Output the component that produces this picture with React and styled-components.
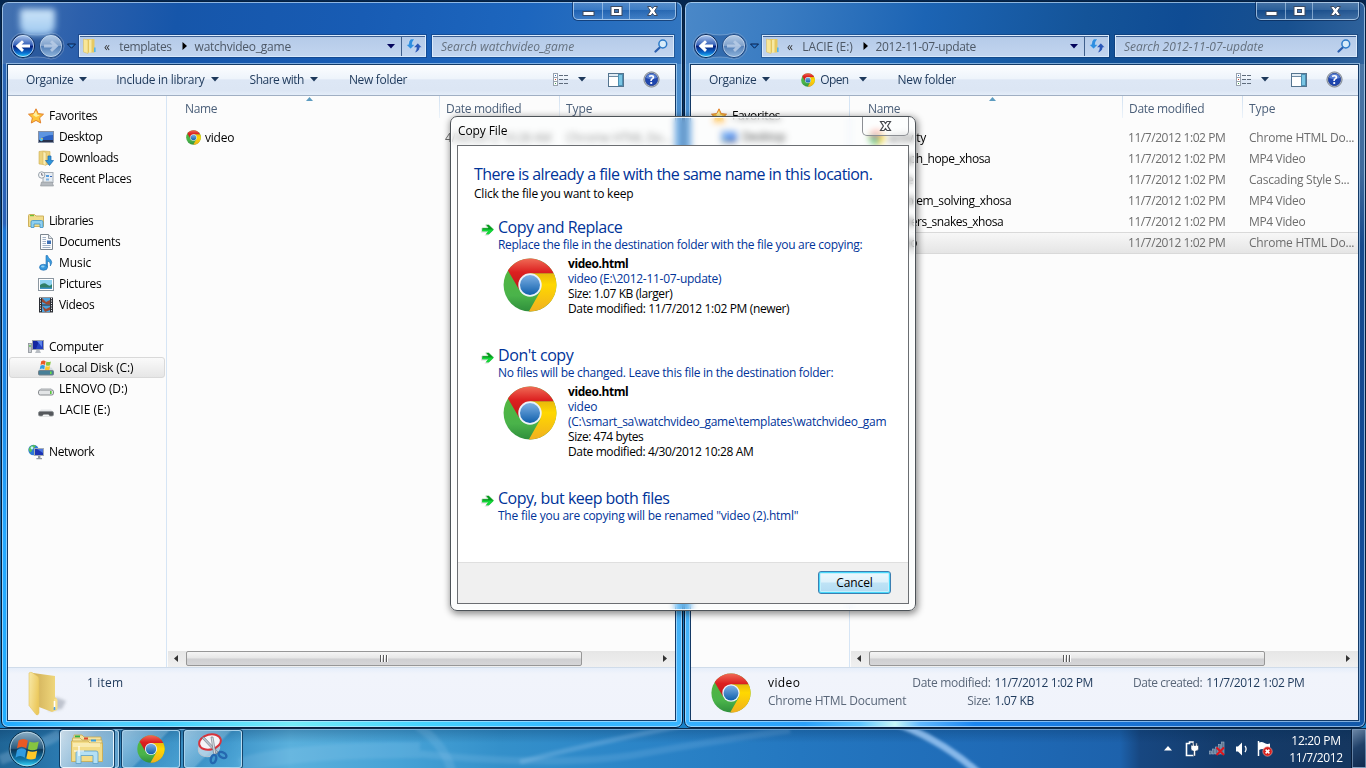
import React, { useLayoutEffect, useRef, useId } from "react";
import styled, { createGlobalStyle, css } from "styled-components";

const Global = createGlobalStyle`
  * { box-sizing: border-box; }
  html, body { margin: 0; padding: 0; overflow: hidden; background: #0a3468; }
  body { font-family: "Open Sans", "Noto Sans", sans-serif; font-size: 12px; line-height: 15px; color: #000; }
  svg { display: block; flex: none; }
`;

/* ---------- text ---------- */

const LabelText = styled.span`
  display: inline-block;
  flex: none;
  width: max-content;
  white-space: pre;
  color: ${(p) => p.$color || "inherit"};
  font-weight: ${(p) => (p.$bold ? 700 : 400)};
  font-style: ${(p) => (p.$italic ? "italic" : "normal")};
`;

/* A label tracked so that it fills the width w. */
function Label({ w, color, bold, italic, children }) {
  const ref = useRef(null);
  useLayoutEffect(() => {
    const el = ref.current;
    el.style.letterSpacing = "0px";
    const natural = el.getBoundingClientRect().width;
    el.style.letterSpacing = `${(w + 0.3 - natural) / children.length}px`;
  }, [w, children]);
  return (
    <LabelText ref={ref} $color={color} $bold={bold} $italic={italic}>
      {children}
    </LabelText>
  );
}

/* ---------- icons ---------- */

function Chrome({ size }) {
  const id = useId().replace(/[^a-zA-Z0-9]/g, "");
  return (
    <svg width={size} height={size} viewBox="0 0 48 48">
      <defs>
        <linearGradient id={id + "r"} x1="0" y1="0" x2="0" y2="1">
          <stop offset="0" stopColor="#f06a55" />
          <stop offset=".45" stopColor="#dc2020" />
          <stop offset="1" stopColor="#c01818" />
        </linearGradient>
        <linearGradient id={id + "b"} x1="0" y1="0" x2="0" y2="1">
          <stop offset="0" stopColor="#7db0e4" />
          <stop offset="1" stopColor="#1060ac" />
        </linearGradient>
        <linearGradient id={id + "y"} x1="0" y1="0" x2="0" y2="1">
          <stop offset="0" stopColor="#e8b80c" />
          <stop offset=".3" stopColor="#ffd800" />
          <stop offset="1" stopColor="#f0b020" />
        </linearGradient>
        <linearGradient id={id + "g"} x1="0" y1="0" x2="0" y2="1">
          <stop offset="0" stopColor="#56b83c" />
          <stop offset=".7" stopColor="#4ab34a" />
          <stop offset="1" stopColor="#2f8f3c" />
        </linearGradient>
      </defs>
      <circle cx="24" cy="24" r="23.5" fill={`url(#${id}g)`} />
      <path d="M24 13.5H45A23.5 23.5 0 0 1 23 47.5L33.3 29.4Z" fill={`url(#${id}y)`} />
      <path d="M45 13.5A23.5 23.5 0 0 0 4.4 11L14 27.5L24 13.5Z" fill={`url(#${id}r)`} />
      <circle cx="24" cy="24" r="10.4" fill="#eef3f8" />
      <circle cx="24" cy="24" r="8.9" fill={`url(#${id}b)`} />
    </svg>
  );
}

const Icon16 = ({ children }) => (
  <svg width="16" height="16" viewBox="0 0 16 16">
    {children}
  </svg>
);

const Flag = () => (
  <>
    <path d="M1 2Q4 0 7 2L6 7Q3 5 0 7Z" fill="#ea5a24" />
    <path d="M8 2.5Q11 4 14 2.5L13 7.5Q10 9 7 7.5Z" fill="#86c440" />
    <path d="M0 8Q3 6 6 8L5 13Q2 11 -1 13Z" fill="#2f9be0" />
    <path d="M7 8.5Q10 10 13 8.5L12 13.5Q9 15 6 13.5Z" fill="#ffc828" />
  </>
);

const icons = {
  star: (
    <Icon16>
      <path d="M8 .8L10.2 5.6L15.5 6.2L11.6 9.8L12.7 15L8 12.4L3.3 15L4.4 9.8L.5 6.2L5.8 5.6Z" fill="#fdc53a" stroke="#e2812c" />
      <path d="M8 3L9.2 6.7L12 7.3L8 9L5 7Z" fill="#fff0a0" />
    </Icon16>
  ),
  desktop: (
    <Icon16>
      <rect x=".5" y="2.5" width="15" height="11" fill="#2b62c4" stroke="#8590a5" />
      <path d="M1 3H15V6Q7 6 1 11Z" fill="#5e95e0" />
      <rect x="1" y="11" width="14" height="2" fill="#27324c" />
      <circle cx="3.4" cy="10.6" r="1.6" fill="#55c0f0" />
      <rect x="3.4" y="9" width="1.3" height="1.3" fill="#f3d040" />
    </Icon16>
  ),
  downloads: (
    <Icon16>
      <path d="M1 1.5L5 1L12 1.5V14.5H5L1 14Z" fill="#ecd27c" stroke="#cfae55" strokeWidth=".6" />
      <path d="M5 1.5L8 2.5V15.5L5 14.5Z" fill="#fbeeb4" stroke="#cfae55" strokeWidth=".5" />
      <path d="M10 6H13V10.5H15.5L11.5 15.5L7.5 10.5H10Z" fill="#2e96dc" stroke="#1a68b0" strokeWidth=".7" />
    </Icon16>
  ),
  recent: (
    <Icon16>
      <rect x="5" y="1.5" width="10" height="10" fill="#e7edf3" stroke="#a4acb4" />
      <rect x="8" y="4" width="3" height="2" fill="#569bdd" />
      <rect x="12" y="5" width="2" height="1" fill="#3a68b8" />
      <rect x="8" y="7.5" width="3" height="2" fill="#86b5e2" />
      <path d="M3.5 11H14L15.5 15H2.5Z" fill="#b5babf" stroke="#8f9499" strokeWidth=".6" />
      <circle cx="3.7" cy="4" r="3.2" fill="#f4f6f8" stroke="#9aa3ac" />
      <path d="M3.7 2V4.2H5.2" stroke="#556" fill="none" strokeWidth=".8" />
    </Icon16>
  ),
  libraries: (
    <Icon16>
      <path d="M.5 2.5Q.5 1.5 1.5 1.5H6.5L8 3H15.5V13.5H.5Z" fill="#f1dc8b" stroke="#cdb05c" />
      <rect x="2" y="2" width="4" height="1.2" fill="#6bbf3a" />
      <path d="M3 14.5V9Q3 7.5 4.5 7.5H13.5Q15 7.5 15 9V14.5H12V11H6V14.5Z" fill="#8fd0f0" stroke="#3e93c8" strokeWidth=".8" />
    </Icon16>
  ),
  documents: (
    <Icon16>
      <path d="M2.5 .5H10.5L14.5 4.5V15.5H2.5Z" fill="#fbfcfd" stroke="#7d8790" />
      <path d="M10.5 .5V4.5H14.5" fill="#dde3e8" stroke="#7d8790" strokeWidth=".8" />
      <path d="M4.5 3.5H8M4.5 5.5H8M4.5 7.5H8M4.5 9.5H8M4.5 11.5H12.5M4.5 13.5H12.5" stroke="#9fb0c4" />
      <rect x="9" y="6.5" width="4" height="3.5" fill="#3c6fb4" />
    </Icon16>
  ),
  music: (
    <Icon16>
      <path d="M8 .5H9.5Q10 3 12.7 4.7Q15 7 12.3 11Q13 7 9.5 6V12H8Z" fill="#3a9de0" stroke="#1c6cb0" strokeWidth=".6" />
      <ellipse cx="5.5" cy="12.3" rx="4" ry="3" fill="#3596dc" stroke="#1c6cb0" strokeWidth=".6" />
      <ellipse cx="4.8" cy="11.5" rx="1.8" ry="1" fill="#8fd0f5" />
    </Icon16>
  ),
  pictures: (
    <Icon16>
      <rect x=".5" y="2.5" width="15" height="12" fill="#fff" stroke="#8b96a0" />
      <rect x="2" y="4" width="12" height="9" fill="#8fd3f2" />
      <path d="M2 9Q6 6 9 8.5T14 8V13H2Z" fill="#2f7f67" />
      <rect x="2" y="11.5" width="12" height="1.5" fill="#3d92c4" />
    </Icon16>
  ),
  videos: (
    <Icon16>
      <rect x="1" y=".5" width="14" height="15" fill="#2a2d33" />
      <rect x="4" y="1" width="8" height="6.5" fill="#4ba3df" />
      <rect x="4" y="8.5" width="8" height="6.5" fill="#4ba3df" />
      <path d="M4 1L8 5L12 3V7.5H9L4 5ZM4 9L8 12L12 10V13L7 15Z" fill="#9a4a34" />
      <path d="M2.5 1V15.5M13.5 1V15.5" stroke="#e8ecef" strokeDasharray="1.2 1.2" />
    </Icon16>
  ),
  computer: (
    <Icon16>
      <rect x=".5" y="4.5" width="3" height="9" fill="#c9cdd2" stroke="#8b9096" strokeWidth=".8" />
      <rect x="1.4" y="6" width="1.2" height="2" fill="#4ac03a" />
      <rect x="4.5" y="1.5" width="11" height="9" fill="#2340c0" stroke="#9aa0aa" />
      <path d="M5 2H11L8 10H5Z" fill="#1426a0" />
      <path d="M9 2H14V8Z" fill="#5c84ea" />
      <path d="M8.5 11H11.5L13 14H7Z" fill="#b9bec4" />
    </Icon16>
  ),
  osdrive: (
    <Icon16>
      <path d="M2.5 7.5H13.5L15.5 10.5H.5Z" fill="#d3dbe0" />
      <g transform="translate(2.5 -.3) scale(.74)"><Flag /></g>
      <rect x=".5" y="10.5" width="15" height="4.5" rx="1" fill="#477f98" stroke="#72818a" />
      <rect x="12" y="11.5" width="1.6" height="2.5" fill="#68e048" />
    </Icon16>
  ),
  drive: (
    <Icon16>
      <path d="M3 7.5H13L15.5 10.5H.5Z" fill="#eceef0" stroke="#b8bcc0" strokeWidth=".6" />
      <rect x=".5" y="9" width="15" height="5" rx="1.8" fill="#e3e5e7" stroke="#85898d" />
      <rect x="12" y="10" width="1.6" height="3" fill="#58c83c" />
    </Icon16>
  ),
  usb: (
    <Icon16>
      <path d="M3 7.5H13L15.5 10.5H.5Z" fill="#e4e6e8" />
      <rect x=".5" y="9.500" width="15" height="4.500" rx="1.5" fill="#55585c" stroke="#8b8f93" strokeWidth=".8" />
      <path d="M4 14.600L5.5 12.500H10.5L12 14.600Z" fill="#f4f5f6" />
    </Icon16>
  ),
  network: (
    <Icon16>
      <circle cx="5.5" cy="6" r="5.2" fill="#2b78d8" />
      <path d="M1 4Q4 0 8 1.5Q7 4 4 4.5Q5 7 2 8.5Q0 6 1 4Z" fill="#58c058" />
      <circle cx="4" cy="4" r="1.4" fill="#c4f0ff" />
      <rect x="6.5" y="4.5" width="9" height="7" fill="#1c34b4" stroke="#a4acb4" />
      <path d="M9 5H15V9Z" fill="#4a74e0" />
      <path d="M10 12H12.4V14H14V15.3H8.4V14H10Z" fill="#9298a0" />
    </Icon16>
  ),
};

const SmallFolder = () => (
  <svg width="14" height="16" viewBox="0 0 14 16">
    <path d="M4 1H11.5V14.5H4Z" fill="#e6c962" />
    <path d="M.5 1L5 2V15.5L.5 14Z" fill="#f8e698" stroke="#d9ba55" strokeWidth=".5" />
    <path d="M6 2L8.5 1.5V14.5L6 15Z" fill="#f7e9a4" />
    <path d="M11 9.5H12.6V14H11Z" fill="#55b4e8" />
  </svg>
);

const BigFolder = () => (
  <svg width="42" height="46" viewBox="0 0 42 46">
    <defs>
      <linearGradient id="fback" x1="0" x2="1">
        <stop offset="0" stopColor="#cfae58" />
        <stop offset="1" stopColor="#f2da7e" />
      </linearGradient>
      <linearGradient id="ffront" x1="0" x2="1" y1="0" y2=".4">
        <stop offset="0" stopColor="#f8e9a8" />
        <stop offset="1" stopColor="#ecc95e" />
      </linearGradient>
      <filter id="fsoft"><feGaussianBlur stdDeviation="1.5" /></filter>
    </defs>
    <path d="M20 40L28 26L38 30L34 38Z" fill="#9fa4b0" opacity=".6" filter="url(#fsoft)" />
    <path d="M5 2L27 5V26L29 28V39L24 41L11 36Z" fill="url(#fback)" />
    <path d="M1 2Q2 1 4 1.500L10 5.500Q11 7 11 9V42Q10 45 8 43.5L1 34.5Z" fill="url(#ffront)" stroke="#e3c560" strokeWidth=".6" />
    <path d="M26 28Q29 27 29.5 29V38L26 39.5Z" fill="#f7e08e" />
    <path d="M26.5 30V37" stroke="#fff" strokeWidth="1.6" />
    <path d="M26.5 36V39" stroke="#4aa0e8" strokeWidth="1.6" />
  </svg>
);

const Caret = ({ color = "#1e395b" }) => (
  <svg width="8" height="5" viewBox="0 0 8 5">
    <path d="M0 0H8L4 4.6Z" fill={color} />
  </svg>
);

const NavOrbs = () => (
  <svg width="69" height="28" viewBox="0 0 69 28">
    <defs>
      <linearGradient id="ob" x1="0" y1="0" x2="0" y2="1">
        <stop offset="0" stopColor="#b4cdf0" />
        <stop offset=".45" stopColor="#3560b8" />
        <stop offset=".52" stopColor="#06207e" />
        <stop offset=".8" stopColor="#0a6fd0" />
        <stop offset="1" stopColor="#30d8ff" />
      </linearGradient>
      <linearGradient id="of" x1="0" y1="0" x2="0" y2="1">
        <stop offset="0" stopColor="#b9cfe8" />
        <stop offset=".5" stopColor="#7d9fca" />
        <stop offset=".52" stopColor="#5480b8" />
        <stop offset="1" stopColor="#93b8de" />
      </linearGradient>
    </defs>
    <path d="M13 1Q27 5 41 1A13 13 0 0 1 41 27Q27 23 13 27A13 13 0 0 1 13 1Z" fill="#0a3474" fillOpacity=".28" stroke="#ffffff" strokeOpacity=".25" />
    <circle cx="13" cy="14" r="11.5" fill="url(#ob)" stroke="#0b2550" />
    <circle cx="13" cy="14" r="10.6" fill="none" stroke="#dcebff" strokeOpacity=".75" />
    <path d="M5.6 14L12 8.2L14 10.2L11.6 12.5H20V15.6H11.6L14 17.8L12 19.9Z" fill="#fff" />
    <circle cx="41" cy="14" r="11.5" fill="url(#of)" stroke="#1d467f" />
    <circle cx="41" cy="14" r="10.6" fill="none" stroke="#d8e6f6" strokeOpacity=".6" />
    <path d="M48.4 14L42 8.2L40 10.2L42.4 12.5H34V15.6H42.4L40 17.8L42 19.9Z" fill="#b8cde6" fillOpacity=".85" />
    <path d="M57.500 12H65.500L61.500 16.2Z" fill="#2a78cc" stroke="#08204c" strokeWidth="1" />
  </svg>
);

const Refresh = () => (
  <svg width="16" height="14" viewBox="0 0 16 14">
    <path d="M4.600 0H8.600Q6.200 2.600 6.200 5.400H9L4.600 10L0 5.400H2.400Q2.600 2 4.600 0Z" fill="#2f8ee0" stroke="#eaf4ff" strokeWidth=".4" />
    <path d="M8.500 14Q10.500 11.500 10.500 8.600H7.600L11.800 4L16 8.600H13.800Q13.600 12.500 8.500 14Z" fill="#2b58b8" stroke="#eaf4ff" strokeWidth=".4" />
  </svg>
);

const Magnifier = () => (
  <svg width="14" height="14" viewBox="0 0 14 14">
    <path d="M6 8.200L1.500 12.500" stroke="#2b5fae" strokeWidth="2.200" strokeLinecap="round" />
    <circle cx="8.800" cy="5" r="3.900" fill="#d8ecfa" stroke="#2c7ac8" strokeWidth="1.500" />
  </svg>
);

const ViewsIcon = () => (
  <svg width="15" height="13" viewBox="0 0 15 13" shapeRendering="crispEdges">
    {[0, 4, 8].map((y, i) => (
      <g key={y}>
        <rect x=".5" y={y + 0.5} width="4" height="4" fill="#fff" stroke="#98a2ae" />
        <rect x="2" y={y + 2} width="1" height="1" fill={["#2f6fc0", "#c8442c", "#3f9a4a"][i]} />
        <path d={`M6 ${y + 2.5}H10M11 ${y + 2.5}H15`} stroke="#5f6c7c" />
      </g>
    ))}
  </svg>
);

const PaneIcon = () => (
  <svg width="16" height="14" viewBox="0 0 16 14" shapeRendering="crispEdges">
    <rect x=".5" y=".5" width="15" height="13" fill="#fff" stroke="#54748f" />
    <path d="M1 1H15V3H1Z" fill="#e2ecf4" />
    <path d="M1 3.500H10" stroke="#6e8ba4" />
    <rect x="10.500" y="1.500" width="4" height="11" fill="#79c5e4" stroke="#4d8fb2" />
  </svg>
);

const HelpText = styled.text`
  font: bold 12px "Open Sans", sans-serif;
  fill: #fff;
`;

const HelpIcon = () => (
  <svg width="17" height="17" viewBox="0 0 17 17">
    <circle cx="8.500" cy="8.500" r="7.600" fill="#c7ccd2" stroke="#7e868f" />
    <circle cx="8.500" cy="8.500" r="6.200" fill="#1f46ae" stroke="#163385" strokeWidth=".6" />
    <path d="M3 7A5.700 5.700 0 0 1 14 7Q8 9 3 7Z" fill="#6b92de" opacity=".8" />
    <HelpText x="8.500" y="12.700" textAnchor="middle">?</HelpText>
  </svg>
);

const ArrowIcon = () => (
  <svg width="15" height="15" viewBox="0 0 15 15">
    <path d="M1 6H7L5 3H8.500L13 8.500L8 13.500H4.500L7 10.500H1Z" fill="#b8b8b8" opacity=".5" />
    <path d="M2 5.700H8L5.500 2.500H8.800L14 7.500L8.800 12.500H5.500L8 9.400H2Z" fill="#079a1e" stroke="#fff" strokeWidth=".5" />
    <path d="M2.200 7.600H13.800L8.800 12.300H6L8.200 9.200H2.200Z" fill="#12d838" />
  </svg>
);

/* ---------- explorer window ---------- */

const Frame = styled.section`
  position: absolute;
  top: 1px;
  left: ${(p) => p.$left}px;
  width: 682px;
  height: 727px;
  display: flex;
  flex-direction: column;
  border: 1px solid #06203f;
  border-radius: 7px;
  box-shadow: inset 0 0 0 1px rgba(205, 232, 255, 0.65);
  background: ${(p) => p.$skin};
`;

const TitleArea = styled.header`
  height: 62px;
  display: flex;
  flex-direction: column;
  position: relative;
`;

const CaptionRow = styled.div`
  display: flex;
  justify-content: flex-end;
  height: 30px;
  padding-right: 6px;
`;

const Captions = styled.div`
  display: flex;
  width: 103px;
  height: 18px;
  border: 1px solid rgba(200, 225, 250, 0.7);
  border-top: 0;
  border-radius: 0 0 5px 5px;
  box-shadow: 0 0 0 1px rgba(5, 30, 70, 0.55);
  background: linear-gradient(rgba(255, 255, 255, 0.2), rgba(255, 255, 255, 0.08) 50%, rgba(10, 50, 110, 0.15) 50%, rgba(255, 255, 255, 0.1));
`;

const Caption = styled.div`
  width: ${(p) => p.$w}px;
  display: flex;
  align-items: center;
  justify-content: center;
  & + & { border-left: 1px solid rgba(200, 225, 250, 0.55); }
`;

const CaptionButtons = () => (
  <Captions>
    <Caption $w={28}>
      <svg width="13" height="12"><rect x="1" y="6.500" width="11" height="4" fill="#fff" stroke="#3b4a62" /></svg>
    </Caption>
    <Caption $w={27}>
      <svg width="13" height="12">
        <rect x="1" y="1.500" width="11" height="9" fill="#fff" stroke="#3b4a62" />
        <rect x="4.500" y="4.500" width="4" height="3" fill="#3f73b2" stroke="#3b4a62" />
      </svg>
    </Caption>
    <Caption $w={46}>
      <svg width="13" height="12" viewBox="0 0 13 12">
        <path d="M1.500 1.500H5L6.500 3.500L8 1.500H11.500L8.600 6L11.500 10.500H8L6.500 8.500L5 10.500H1.500L4.400 6Z" fill="#fff" stroke="#3b4a62" />
      </svg>
    </Caption>
  </Captions>
);

const Ghost = styled.div`
  position: absolute;
  left: 18px;
  top: 7px;
  width: 35px;
  height: 26px;
  background: linear-gradient(#d6ecfd, #a4cef4);
  border-radius: 3px 3px 9px 9px;
  filter: blur(3px);
  opacity: 0.95;
`;

const NavRow = styled.div`
  display: flex;
  align-items: center;
  height: 28px;
  padding-left: 8px;
`;

const glass = css`
  height: 22px;
  display: flex;
  align-items: center;
  border: 1px solid rgba(225, 240, 255, 0.8);
  box-shadow: 0 0 0 1px rgba(8, 40, 90, 0.35), inset 0 1px 0 #3c5f92;
  background: linear-gradient(#b4cae8, #c2d5ef);
`;

const AddressBar = styled.div`
  ${glass}
  width: 347px;
  padding-left: 3px;
`;

const Crumbs = styled.div`
  display: flex;
  align-items: center;
  flex: 1;
  gap: 7px;
`;

const CrumbArrow = styled.svg`
  margin: 0 1px 0 3px;
`;

const RefreshBox = styled.div`
  width: 24px;
  height: 20px;
  margin-left: 6px;
  display: flex;
  align-items: center;
  justify-content: center;
  border-left: 1px solid #40608c;
`;

const SearchBox = styled.div`
  ${glass}
  width: 242px;
  margin-left: 6px;
  padding: 0 5px 0 8px;
  justify-content: space-between;
`;

const Client = styled.div`
  width: 669px;
  height: 657px;
  margin-left: 5px;
  display: flex;
  flex-direction: column;
  border: 1px solid #143a66;
  box-shadow: 0 0 0 1px rgba(200, 230, 255, 0.6);
  background: #fcfcfc;
`;

const Toolbar = styled.div`
  height: 31px;
  flex: none;
  display: flex;
  align-items: center;
  padding: 0 15px 1px 18px;
  color: #1e395b;
  border-bottom: 1px solid #a0afc3;
  background: linear-gradient(#fcfdff, #eef4fb 45%, #dde7f5 50%, #dce6f4 85%, #e4edf9);
`;

const ToolItem = styled.div`
  display: flex;
  align-items: center;
  gap: ${(p) => p.$gap || 6}px;
  margin-right: ${(p) => p.$after || 0}px;
`;

const Spacer = styled.div`
  flex: 1;
`;

const Body = styled.div`
  display: flex;
  height: 571px;
`;

const NavPane = styled.nav`
  width: 159px;
  padding-top: 9px;
  border-right: 1px solid #d6e5f5;
`;

const NavItem = styled.div`
  height: 21px;
  display: flex;
  align-items: center;
  gap: 5px;
  margin-right: 1px;
  margin-left: 1px;
  padding-left: ${(p) => (p.$root ? 18 : 28)}px;
  border: 1px solid transparent;
  ${(p) =>
    p.$active &&
    css`
      border-color: #d9d9d9;
      border-radius: 3px;
      background: linear-gradient(#fafafa, #e6e6e6);
    `}
`;

const ListPane = styled.div`
  flex: 1;
  display: flex;
  flex-direction: column;
  min-width: 0;
`;

const cols = "273px 120px 1fr";

const HeaderRow = styled.div`
  display: grid;
  grid-template-columns: ${cols};
  height: 22px;
  margin-bottom: 9px;
  color: #4c607a;
  position: relative;
`;

const HeadCell = styled.div`
  padding: 5px 0 0 ${(p) => p.$pad}px;
  border-image: ${(p) => (p.$last ? "none" : "linear-gradient(#cfdff0, #eef4fa) 1")};
  border-width: 0 ${(p) => (p.$last ? 0 : 1)}px 0 0;
  border-style: solid;
`;

const SortMark = styled.div`
  position: absolute;
  left: 139px;
  top: 1px;
`;

const FileRow = styled.div`
  display: grid;
  grid-template-columns: ${cols};
  align-items: center;
  height: 21px;
  color: #6d6d6d;
  box-shadow: ${(p) => (p.$selected ? "inset 0 1px #d9d9d9, 0 1px #d9d9d9" : "none")};
  background: ${(p) => (p.$selected ? "linear-gradient(#f8f8f8, #e5e5e5)" : "none")};
`;

const FileCell = styled.div`
  display: flex;
  align-items: center;
  gap: 4px;
  padding-left: ${(p) => p.$pad}px;
`;

const ScrollBar = styled.div`
  height: 16px;
  margin: auto 0 0 1px;
  display: flex;
  align-items: flex-start;
  background: linear-gradient(#e6e6e6, #f0f0f0);
`;

const ScrollArrow = styled.div`
  width: 18px;
  height: 15px;
  padding-right: 2px;
  display: flex;
  align-items: center;
  justify-content: center;
`;

const Thumb = styled.div`
  width: 396px;
  height: 15px;
  display: flex;
  align-items: center;
  justify-content: center;
  border: 1px solid #979797;
  border-radius: 2px;
  background: linear-gradient(#f5f5f5, #e6e6e6 48%, #cfcfd1 52%, #d6d6d8);
`;

const Details = styled.footer`
  flex: 1;
  display: flex;
  border-top: 1px solid #d0dcea;
  background: linear-gradient(#e6eefa, #f1f4fb 6px, #f0f3fb);
  color: #1e395b;
`;

const Grip = () => (
  <svg width="8" height="7" shapeRendering="crispEdges">
    <path d="M.5 0V7M3.500 0V7M6.500 0V7" stroke="#5a5a5a" />
    <path d="M1.500 0V7M4.500 0V7M7.500 0V7" stroke="#fff" />
  </svg>
);

const navItems = [
  ["star", "Favorites", 48, 1],
  ["desktop", "Desktop", 43],
  ["downloads", "Downloads", 59],
  ["recent", "Recent Places", 72],
  null,
  ["libraries", "Libraries", 44, 1],
  ["documents", "Documents", 61],
  ["music", "Music", 32],
  ["pictures", "Pictures", 42],
  ["videos", "Videos", 35],
  null,
  ["computer", "Computer", 54, 1],
  ["osdrive", "Local Disk (C:)", 74],
  ["drive", "LENOVO (D:)", 68],
  ["usb", "LACIE (E:)", 51],
  null,
  ["network", "Network", 45, 1],
];

function Explorer({ left, skin, ghost, crumbs, search, tools, nav, files, activeNav, children }) {
  return (
    <Frame $left={left} $skin={skin}>
      <TitleArea>
        {ghost && <Ghost />}
        <CaptionRow>
          <CaptionButtons />
        </CaptionRow>
        <NavRow>
          <NavOrbs />
          <AddressBar>
            <Crumbs>
              <SmallFolder />
              <Label w={8} color="#333">«</Label>
              <Label w={crumbs[0][1]} color="#4d5866">{crumbs[0][0]}</Label>
              <CrumbArrow width="5" height="8"><path d="M.500 0L5 4L.500 8Z" fill="#000" /></CrumbArrow>
              <Label w={crumbs[1][1]} color="#4d5866">{crumbs[1][0]}</Label>
            </Crumbs>
            <Caret color="#04045c" />
            <RefreshBox><Refresh /></RefreshBox>
          </AddressBar>
          <SearchBox>
            <Label w={search[1]} italic color="#65717f">{search[0]}</Label>
            <Magnifier />
          </SearchBox>
        </NavRow>
      </TitleArea>
      <Client>
        <Toolbar>
          {tools}
          <Spacer />
          <ToolItem $after={22} $gap={10}><ViewsIcon /><Caret /></ToolItem>
          <ToolItem $after={19}><PaneIcon /></ToolItem>
          <HelpIcon />
        </Toolbar>
        <Body>
          <NavPane>
            {nav.map((it, i) => (
              <NavItem key={i} $root={it && it[3]} $active={it && it[0] === activeNav}>
                {it && icons[it[0]]}
                {it && <Label w={it[2]}>{it[1]}</Label>}
              </NavItem>
            ))}
          </NavPane>
          <ListPane>
            <HeaderRow>
              <HeadCell $pad={18}><Label w={32}>Name</Label></HeadCell>
              <HeadCell $pad={6}><Label w={75}>Date modified</Label></HeadCell>
              <HeadCell $pad={6} $last><Label w={26}>Type</Label></HeadCell>
              <SortMark>
                <svg width="7" height="4"><path d="M0 4L3.500 0L7 4Z" fill="#5d9cc0" /></svg>
              </SortMark>
            </HeaderRow>
            {files.map((f) => (
              <FileRow key={f.name} $selected={f.selected}>
                <FileCell $pad={19}>
                  <Chrome size={15} />
                  <Label w={f.w} color="#000">{f.name}</Label>
                </FileCell>
                <FileCell $pad={5}><Label w={f.dw}>{f.date}</Label></FileCell>
                <FileCell $pad={6}><Label w={f.tw}>{f.type}</Label></FileCell>
              </FileRow>
            ))}
            <ScrollBar>
              <ScrollArrow><svg width="4" height="7"><path d="M4 0V7L0 3.500Z" fill="#333" /></svg></ScrollArrow>
              <Thumb><Grip /></Thumb>
              <Spacer />
              <ScrollArrow><svg width="4" height="7"><path d="M0 0V7L4 3.500Z" fill="#333" /></svg></ScrollArrow>
            </ScrollBar>
          </ListPane>
        </Body>
        {children}
      </Client>
    </Frame>
  );
}

/* ---------- details pane ---------- */

const DetailsIcon = styled.div`
  padding: ${(p) => p.$top}px 0 0 20px;
  width: ${(p) => p.$w}px;
`;

const DetailsCol = styled.div`
  display: grid;
  grid-template-columns: auto auto;
  column-gap: 4px;
  grid-auto-rows: 18px;
  justify-items: end;
  align-content: start;
  padding-top: 7px;
  margin-right: ${(p) => p.$after || 0}px;
`;

const DetailsStack = styled.div`
  display: flex;
  flex-direction: column;
  align-items: flex-start;
  gap: 3px;
  padding-top: 7px;
  margin-right: ${(p) => p.$after || 0}px;
`;

const Start = styled.div`
  justify-self: start;
`;

/* ---------- dialog ---------- */

const Dialog = styled.section`
  position: absolute;
  left: 450px;
  top: 116px;
  width: 466px;
  height: 495px;
  padding: 0 6px 6px;
  display: flex;
  flex-direction: column;
  border: 1px solid #4d5358;
  border-radius: 7px;
  background: rgba(250, 255, 255, 0.28);
  backdrop-filter: blur(3px) saturate(1.4);
  box-shadow: inset 0 0 0 1px rgba(255, 255, 255, 0.85), 1px 2px 7px 1px rgba(0, 0, 0, 0.45);
`;

const DialogTitle = styled.header`
  display: flex;
  justify-content: space-between;
  height: 28px;
  padding: 6px 0 0 1px;
`;

const DialogClose = styled.div`
  width: 47px;
  height: 19px;
  margin-top: -6px;
  display: flex;
  align-items: center;
  justify-content: center;
  border: 1px solid #8c8f94;
  border-top: 0;
  border-radius: 0 0 5px 5px;
  background: rgba(255, 255, 255, 0.45);
`;

const DialogBody = styled.div`
  flex: 1;
  display: flex;
  flex-direction: column;
  border: 1px solid #6b6e72;
  background: #fff;
`;

const DialogMain = styled.div`
  flex: 1;
  padding: 17px 16px 0;
`;

const Heading = styled.div`
  font-size: 16px;
  line-height: 22px;
  margin-bottom: 1px;
  color: #003399;
`;

const Option = styled.div`
  display: flex;
  gap: 3px;
  padding-left: 6px;
  margin-top: ${(p) => p.$top}px;
  color: #003399;
`;

const OptionArrow = styled.div`
  padding-top: 5px;
`;

const OptionText = styled.div`
  display: flex;
  flex-direction: column;
  align-items: flex-start;
`;

const OptionTitle = styled.div`
  font-size: 16px;
  line-height: 20px;
  height: 20px;
`;

const FileCard = styled.div`
  display: flex;
  gap: 11px;
  margin: 4px 0 0 5px;
`;

const CardIcon = styled.div`
  padding-top: 2px;
`;

const CardLines = styled.div`
  display: flex;
  flex-direction: column;
  align-items: flex-start;
`;

const DialogFooter = styled.footer`
  height: 41px;
  display: flex;
  justify-content: flex-end;
  padding: 8px 17px 0;
  border-top: 1px solid #dfdfdf;
  background: #f0f0f0;
`;

const Button = styled.button`
  width: 73px;
  height: 23px;
  padding: 0;
  font: inherit;
  color: #000;
  border: 1px solid #3c7fb1;
  border-radius: 3px;
  box-shadow: inset 0 0 0 1px #48d8fb, inset 0 0 0 2px #c4f0fc;
  background: linear-gradient(#eef8fd, #ddf1fb 48%, #bfe3f6 52%, #b2dbf2);
`;

const blue = "#003399";

function CopyDialog() {
  return (
    <Dialog>
      <DialogTitle>
        <Label w={49}>Copy File</Label>
        <DialogClose>
          <svg width="13" height="12" viewBox="0 0 13 12">
            <path d="M1.500 1.500H5L6.500 3.500L8 1.500H11.500L8.600 6L11.500 10.500H8L6.500 8.500L5 10.500H1.500L4.400 6Z" fill="#fff" stroke="#44474c" strokeWidth="1.200" />
          </svg>
        </DialogClose>
      </DialogTitle>
      <DialogBody>
        <DialogMain>
          <Heading><Label w={398}>There is already a file with the same name in this location.</Label></Heading>
          <Label w={159}>Click the file you want to keep</Label>
          <Option $top={16}>
            <OptionArrow><ArrowIcon /></OptionArrow>
            <OptionText>
              <OptionTitle><Label w={124}>Copy and Replace</Label></OptionTitle>
              <Label w={364}>Replace the file in the destination folder with the file you are copying:</Label>
              <FileCard>
                <CardIcon><Chrome size={54} /></CardIcon>
                <CardLines>
                  <Label w={60} bold color="#000">video.html</Label>
                  <Label w={153} color={blue}>video (E:\2012-11-07-update)</Label>
                  <Label w={104} color="#000">Size: 1.07 KB (larger)</Label>
                  <Label w={221} color="#000">Date modified: 11/7/2012 1:02 PM (newer)</Label>
                </CardLines>
              </FileCard>
            </OptionText>
          </Option>
          <Option $top={29}>
            <OptionArrow><ArrowIcon /></OptionArrow>
            <OptionText>
              <OptionTitle><Label w={75}>Don't copy</Label></OptionTitle>
              <Label w={335}>No files will be changed. Leave this file in the destination folder:</Label>
              <FileCard>
                <CardIcon><Chrome size={54} /></CardIcon>
                <CardLines>
                  <Label w={60} bold color="#000">video.html</Label>
                  <Label w={29} color={blue}>video</Label>
                  <Label w={318} color={blue}>(C:\smart_sa\watchvideo_game\templates\watchvideo_gam</Label>
                  <Label w={75} color="#000">Size: 474 bytes</Label>
                  <Label w={185} color="#000">Date modified: 4/30/2012 10:28 AM</Label>
                </CardLines>
              </FileCard>
            </OptionText>
          </Option>
          <Option $top={29}>
            <OptionArrow><ArrowIcon /></OptionArrow>
            <OptionText>
              <OptionTitle><Label w={171}>Copy, but keep both files</Label></OptionTitle>
              <Label w={300}>The file you are copying will be renamed "video (2).html"</Label>
            </OptionText>
          </Option>
        </DialogMain>
        <DialogFooter>
          <Button><Label w={36}>Cancel</Label></Button>
        </DialogFooter>
      </DialogBody>
    </Dialog>
  );
}

/* ---------- taskbar ---------- */

const Bar = styled.footer`
  position: absolute;
  left: 0;
  bottom: 0;
  width: 1366px;
  height: 40px;
  display: flex;
  align-items: center;
  border-top: 1px solid #0a2a4c;
  box-shadow: inset 0 1px 0 rgba(190, 220, 245, 0.5);
  background:
    linear-gradient(rgba(0, 40, 80, 0.28), rgba(0, 40, 80, 0) 14px),
    linear-gradient(90deg, #1f6596, #2b7ab0 60px, #3c93c8 230px, #5ab0dc 290px, #46a2d6 400px, #3490ca 500px, #2c86c8 620px, #2477c0 800px, #1f6ab6 1000px, #1d62ac 1120px, #174781 1140px, #143c6c 1220px, #15365e 1366px);
`;

const Swoosh = styled.svg`
  position: absolute;
  left: 0;
  top: 1px;
`;

const StartOrb = styled.div`
  width: 60px;
  padding-left: 8px;
  position: relative;
`;

const TaskButton = styled.div`
  position: relative;
  width: ${(p) => p.$w}px;
  height: 38px;
  margin: 1px ${(p) => p.$after}px 0 0;
  display: flex;
  align-items: center;
  justify-content: center;
  border: 1px solid ${(p) => (p.$active ? "#e9f5fd" : "rgba(200,230,248,.75)")};
  border-radius: 3px;
  box-shadow: 0 0 0 1px rgba(6, 40, 74, 0.75);
  background: ${(p) =>
    p.$active
      ? "linear-gradient(120deg, rgba(255,255,255,.75), rgba(225,240,250,.55) 50%, rgba(160,205,235,.6))"
      : "linear-gradient(135deg, rgba(215,240,255,.6), rgba(160,210,235,.4) 48%, rgba(80,170,220,.2) 52%, rgba(110,200,240,.35))"};
`;

const StackEdge = styled.div`
  width: 4px;
  height: 38px;
  margin: 1px 3px 0 0;
  border: 1px solid rgba(210, 235, 250, 0.7);
  border-left: 0;
  border-radius: 0 3px 3px 0;
  box-shadow: 1px 0 0 rgba(6, 40, 74, 0.75);
  background: rgba(160, 205, 235, 0.45);
`;

const Tray = styled.div`
  margin-left: auto;
  display: flex;
  align-items: center;
  position: relative;
`;

const TraySlot = styled.div`
  margin-right: ${(p) => p.$after}px;
`;

const Clock = styled.div`
  width: 56px;
  margin-right: 8px;
  display: flex;
  flex-direction: column;
  align-items: center;
  gap: 2px;
  color: #fff;
`;

const ShowDesktop = styled.div`
  width: 14px;
  height: 39px;
  border: 1px solid rgba(160, 190, 220, 0.55);
  box-shadow: -1px 0 0 rgba(0, 10, 30, 0.6);
  background: linear-gradient(150deg, rgba(180, 200, 225, 0.55), rgba(60, 90, 130, 0.3) 45%, rgba(10, 25, 55, 0.4));
`;

const Orb = () => (
  <svg width="38" height="38" viewBox="0 0 38 38">
    <defs>
      <linearGradient id="orb" x1="0" y1="0" x2="0" y2="1">
        <stop offset="0" stopColor="#8fb2c8" />
        <stop offset=".48" stopColor="#2b5c80" />
        <stop offset=".52" stopColor="#0d3758" />
        <stop offset=".8" stopColor="#0d78ac" />
        <stop offset="1" stopColor="#3fe0ff" />
      </linearGradient>
    </defs>
    <circle cx="19" cy="19" r="17.800" fill="url(#orb)" stroke="#0c3450" />
    <circle cx="19" cy="19" r="16.800" fill="none" stroke="#cfe8f5" strokeOpacity=".7" />
    <g transform="translate(9 7.500) scale(1.550)"><Flag /></g>
  </svg>
);

const ExplorerIcon = () => (
  <svg width="34" height="32" viewBox="0 0 34 32">
    <path d="M4 2H12L14 4H31V20H4Z" fill="#f4e3a0" stroke="#c9a94e" strokeWidth=".8" />
    <rect x="5" y="2.500" width="5" height="2" fill="#2fb044" />
    <path d="M2.500 5H10L12 7H32V24H2.500Z" fill="#f6e6a6" stroke="#c9a94e" strokeWidth=".8" />
    <rect x="14" y="4.500" width="4" height="2" fill="#d84830" />
    <rect x="21" y="6.500" width="5" height="2" fill="#3a9fe0" />
    <path d="M1.500 8H18L20 10H32.500V28.500H1.500Z" fill="#f3dc88" stroke="#c9a94e" strokeWidth=".8" />
    <path d="M3 10H30V14H3Z" fill="#fbf1c2" opacity=".7" />
    <path d="M6 30.500V20Q6 18 8 18H26Q28 18 28 20V30.500H23V22.500H11V30.500Z" fill="#b4e0f4" stroke="#5b9fc8" strokeWidth=".8" />
    <path d="M9 13V23M4 18H14" stroke="#fff" strokeWidth="1.200" />
  </svg>
);

const SnipIcon = () => (
  <svg width="34" height="32" viewBox="0 0 34 32">
    <ellipse cx="13" cy="15" rx="11" ry="8.500" transform="rotate(-18 13 15)" fill="#dce8f0" fillOpacity=".6" stroke="#b9c6d2" />
    <ellipse cx="14" cy="9" rx="11" ry="7.500" transform="rotate(-14 14 9)" fill="#f4f4f8" stroke="#d8343c" strokeWidth="2" />
    <path d="M6 5L21 21L22 19L8 4Z" fill="#b8c2cc" stroke="#66727e" strokeWidth=".6" />
    <path d="M15 4L18 23L20 22L17 4Z" fill="#d8dee4" stroke="#66727e" strokeWidth=".6" />
    <ellipse cx="17.500" cy="26" rx="2.600" ry="4.200" transform="rotate(15 17.500 26)" fill="none" stroke="#2568b0" strokeWidth="2.400" />
    <ellipse cx="26.500" cy="22" rx="4.200" ry="2.600" transform="rotate(28 26.500 22)" fill="none" stroke="#2568b0" strokeWidth="2.400" />
  </svg>
);

function Taskbar() {
  return (
    <Bar>
      <Swoosh width="1366" height="38" viewBox="0 0 1366 38">
        <defs><filter id="sw" x="-10%" y="-50%" width="120%" height="200%"><feGaussianBlur stdDeviation="1.600" /></filter></defs>
        <g filter="url(#sw)" fill="none" stroke="#cfe8ff">
          <path d="M880 -12Q935 4 980 44" strokeWidth="7" strokeOpacity=".75" stroke="#a8d0fa" />
          <path d="M520 32Q590 14 680 -4" strokeWidth="5" strokeOpacity=".2" />
          <path d="M420 24Q560 38 640 24T790 0" strokeWidth="7" strokeOpacity=".12" />
          <path d="M418 -4Q445 15 452 42" strokeWidth="9" strokeOpacity=".12" />
          <path d="M0 30Q40 15 60 4" strokeWidth="10" strokeOpacity=".22" />
          <path d="M240 36Q290 20 420 20" strokeWidth="16" strokeOpacity=".12" />
        </g>
      </Swoosh>
      <StartOrb><Orb /></StartOrb>
      <TaskButton $w={54} $after={1} $active><ExplorerIcon /></TaskButton>
      <StackEdge />
      <TaskButton $w={58} $after={4}><Chrome size={28} /></TaskButton>
      <TaskButton $w={58} $after={0}><SnipIcon /></TaskButton>
      <Tray>
        <TraySlot $after={13}><svg width="8" height="5"><path d="M0 4.500H8L4 0Z" fill="#fff" /></svg></TraySlot>
        <TraySlot $after={9}>
          <svg width="15" height="16" viewBox="0 0 15 16">
            <path d="M8 2.500V1H4.500V2.500H1.500V14.500H9" fill="none" stroke="#fff" strokeWidth="1.600" />
            <path d="M6 4V7.500Q6 10 8.500 10V15H10.500V10Q13.500 10 13.500 7.500V4.500H12.200V2H10.800V4.500H9V2H7.600V4.500Z" fill="#fff" stroke="#1c3350" strokeWidth=".5" />
          </svg>
        </TraySlot>
        <TraySlot $after={10}>
          <svg width="16" height="15" viewBox="0 0 16 15">
            <g fill="#5f7590" stroke="#9fb2c6" strokeWidth=".6">
              <rect x=".5" y="10" width="2" height="3" /><rect x="3.500" y="8" width="2" height="5" /><rect x="6.500" y="6" width="2" height="7" />
              <rect x="9.500" y="3.500" width="2" height="9.500" /><rect x="12.500" y="1" width="2.500" height="12" />
            </g>
            <path d="M7.500 6.500L15 14M15 6.500L7.500 14" stroke="#e0141c" strokeWidth="2" />
          </svg>
        </TraySlot>
        <TraySlot $after={8}>
          <svg width="14" height="14" viewBox="0 0 14 14">
            <path d="M1 4.500H3L7 .500V13.500L3 9.500H1Z" fill="#fff" />
            <path d="M10 4Q12.200 7 10 10" fill="none" stroke="#fff" strokeWidth="1.300" />
          </svg>
        </TraySlot>
        <TraySlot $after={15}>
          <svg width="16" height="16" viewBox="0 0 16 16">
            <path d="M1.500 0V15" stroke="#fff" strokeWidth="1.500" />
            <path d="M2 1.500Q5 .500 7.500 2T13 2.500V9Q10 9.500 7.500 8.500T2 9Z" fill="#fff" />
            <circle cx="10.500" cy="10.500" r="4.700" fill="#d8201c" stroke="#f3b4b0" strokeWidth=".6" />
            <path d="M8.600 8.600L12.400 12.400M12.400 8.600L8.600 12.400" stroke="#fff" strokeWidth="1.500" />
          </svg>
        </TraySlot>
        <Clock>
          <Label w={49}>12:20 PM</Label>
          <Label w={53}>11/7/2012</Label>
        </Clock>
        <ShowDesktop />
      </Tray>
    </Bar>
  );
}

/* ---------- page ---------- */

const Desktop = styled.main`
  position: relative;
  width: 1366px;
  height: 768px;
  overflow: hidden;
  background: linear-gradient(#04264f, #0d5aa0 50%, #1b86cc);
`;

const leftSkin = `
  linear-gradient(90deg, #1fa8ff, #3cc0ff 60px, #52d0ff 110px, #45cfff 160px, #74ecf8 290px, #46d4ff 420px, #35b8ff 560px, #38b4ff) bottom / 100% 7px no-repeat,
  linear-gradient(#2a66b5, #2a62b8 22%, #1a78d8 23%, #1a88e8 45%, #25a8ff 65%, #1fb0ff) left 62px / 7px 100% no-repeat,
  linear-gradient(#4a8ccc, #3f8fd4 30%, #3fa0e4 60%, #45b8ff 85%) right 62px / 8px 100% no-repeat,
  linear-gradient(100deg, #4472b0, #2c60ac 10%, #1656aa 22%, #185cb4 45%, #1d66be 65%, #3578c0 88%, #4b8ac8)`;

const rightSkin = `
  linear-gradient(90deg, #35b0ff, #2aa0fa 120px, #5cc4ff 175px, #c8f8f8 210px, #60b8ff 235px, #1a86f0 290px, #1a78dc 400px, #1560b8 580px, #1258a8) bottom / 100% 7px no-repeat,
  linear-gradient(#4a8ccc, #3f8fd4 30%, #3fa0e4 60%, #45b8ff 85%) left 62px / 7px 100% no-repeat,
  linear-gradient(#4a76a6, #3f6a9c 15%, #16498c 25%, #124a94 60%, #1258a8) right 62px / 8px 100% no-repeat,
  linear-gradient(100deg, #4a88c8, #3a7cc2 12%, #1c64b4 30%, #145499 50%, #0f4c94 62%, #18508f 75%, #3a6ba2 90%, #5580aa)`;

const modified = "11/7/2012 1:02 PM";
const chromeDoc = { type: "Chrome HTML Do...", tw: 105 };
const mp4 = { type: "MP4 Video", tw: 56 };

const rightFiles = [
  { name: "activity", w: 38, ...chromeDoc },
  { name: "joseph_hope_xhosa", w: 102, ...mp4 },
  { name: "style", w: 25, type: "Cascading Style S...", tw: 100 },
  { name: "problem_solving_xhosa", w: 123, ...mp4 },
  { name: "ladders_snakes_xhosa", w: 115, ...mp4 },
  { name: "video", w: 29, ...chromeDoc, selected: true },
].map((f) => ({ date: modified, dw: 97, ...f }));

export default function App() {
  return (
    <Desktop>
      <Global />
      <Explorer
        left={1}
        skin={leftSkin}
        ghost
        crumbs={[["templates", 52], ["watchvideo_game", 96]]}
        search={["Search watchvideo_game", 133]}
        nav={navItems}
        activeNav="osdrive"
        files={[{ name: "video", w: 29, date: "4/30/2012 10:28 AM", dw: 106, ...chromeDoc }]}
        tools={
          <>
            <ToolItem $after={29}><Label w={47}>Organize</Label><Caret /></ToolItem>
            <ToolItem $after={31}><Label w={88}>Include in library</Label><Caret /></ToolItem>
            <ToolItem $after={31}><Label w={54}>Share with</Label><Caret /></ToolItem>
            <ToolItem><Label w={58}>New folder</Label></ToolItem>
          </>
        }
      >
        <Details>
          <DetailsIcon $w={79} $top={3}><BigFolder /></DetailsIcon>
          <DetailsStack><Label w={36}>1 item</Label></DetailsStack>
        </Details>
      </Explorer>
      <Explorer
        left={684}
        skin={rightSkin}
        crumbs={[["LACIE (E:)", 50], ["2012-11-07-update", 100]]}
        search={["Search 2012-11-07-update", 139]}
        nav={navItems.slice(0, 2)}
        files={rightFiles}
        tools={
          <>
            <ToolItem $after={31}><Label w={47}>Organize</Label><Caret /></ToolItem>
            <ToolItem $after={31} $gap={5}>
              <Chrome size={14} />
              <Label w={28}>Open</Label>
              <Spacer />
              <Caret />
            </ToolItem>
            <ToolItem><Label w={58}>New folder</Label></ToolItem>
          </>
        }
      >
        <Details>
          <DetailsIcon $w={77} $top={5}><Chrome size={40} /></DetailsIcon>
          <DetailsStack $after={6}>
            <Label w={32} color="#000">video</Label>
            <Label w={138} color="#5a6779">Chrome HTML Document</Label>
          </DetailsStack>
          <DetailsCol $after={40}>
            <Label w={78} color="#5a6779">Date modified:</Label>
            <Start><Label w={98}>{modified}</Label></Start>
            <Label w={23} color="#5a6779">Size:</Label>
            <Start><Label w={39}>1.07 KB</Label></Start>
          </DetailsCol>
          <DetailsCol>
            <Label w={69} color="#5a6779">Date created:</Label>
            <Label w={98}>{modified}</Label>
          </DetailsCol>
        </Details>
      </Explorer>
      <CopyDialog />
      <Taskbar />
    </Desktop>
  );
}
